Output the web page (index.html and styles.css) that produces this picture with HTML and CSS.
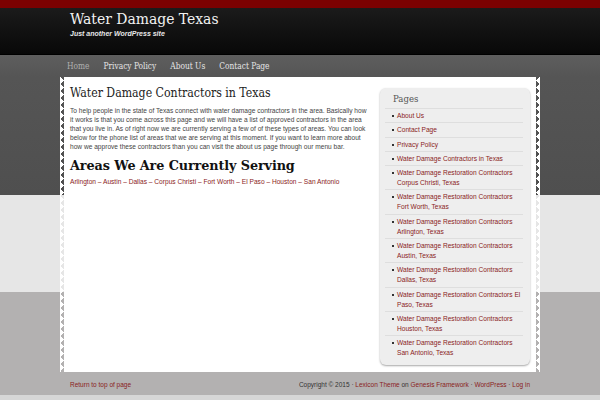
FILE: index.html
```html
<!DOCTYPE html>
<html>
<head>
<meta charset="utf-8">
<link rel="stylesheet" href="styles.css">
</head>
<body>
<div class="topbar"></div>
<header class="header">
  <div class="wrap">
    <div class="site-title">Water Damage Texas</div>
    <div class="tagline">Just another WordPress site</div>
  </div>
</header>
<nav class="nav">
  <div class="wrap nav-inner">
    <span class="nav-item current">Home</span>
    <span class="nav-item">Privacy Policy</span>
    <span class="nav-item">About Us</span>
    <span class="nav-item">Contact Page</span>
  </div>
</nav>
<div class="page">
  <div class="inner">
    <main class="content">
      <h1 class="entry-title">Water Damage Contractors in Texas</h1>
      <p class="entry-text">To help people in the state of Texas connect with water damage contractors in the area. Basically how it works is that you come across this page and we will have a list of approved contractors in the area that you live in. As of right now we are currently serving a few of of these types of areas. You can look below for the phone list of areas that we are serving at this moment. If you want to learn more about how we approve these contractors than you can visit the about us page through our menu bar.</p>
      <h2 class="areas-title">Areas We Are Currently Serving</h2>
      <p class="areas"><a>Arlington</a> – <a>Austin</a> – <a>Dallas</a> – <a>Corpus Christi</a> – <a>Fort Worth</a> – <a>El Paso</a> – <a>Houston</a> – <a>San Antonio</a></p>
    </main>
    <aside class="sidebar">
      <h4 class="widget-title">Pages</h4>
      <ul class="pages">
        <li><a>About Us</a></li>
        <li><a>Contact Page</a></li>
        <li><a>Privacy Policy</a></li>
        <li><a>Water Damage Contractors in Texas</a></li>
        <li><a>Water Damage Restoration Contractors Corpus Christi, Texas</a></li>
        <li><a>Water Damage Restoration Contractors Fort Worth, Texas</a></li>
        <li><a>Water Damage Restoration Contractors Arlington, Texas</a></li>
        <li><a>Water Damage Restoration Contractors Austin, Texas</a></li>
        <li><a>Water Damage Restoration Contractors Dallas, Texas</a></li>
        <li><a>Water Damage Restoration Contractors El Paso, Texas</a></li>
        <li><a>Water Damage Restoration Contractors Houston, Texas</a></li>
        <li><a>Water Damage Restoration Contractors San Antonio, Texas</a></li>
      </ul>
    </aside>
  </div>
  <footer class="footer wrap">
    <a class="totop">Return to top of page</a>
    <span class="credits">Copyright © 2015 · <a>Lexicon Theme</a> on <a>Genesis Framework</a> · <a>WordPress</a> · <a>Log in</a></span>
  </footer>
</div>
</body>
</html>
```
FILE: styles.css
```css
html, body {
  margin: 0;
  padding: 0;
}
body {
  width: 600px;
  height: 400px;
  overflow: hidden;
  font-family: "Liberation Sans", Arial, sans-serif;
  background: #b3b1b1;
}
a {
  color: #8a1c1c;
  text-decoration: none;
}
.wrap {
  width: 476px;
  margin: 0 auto;
  box-sizing: border-box;
}
.topbar {
  height: 8px;
  background: #7b0101;
}
.header {
  height: 46px;
  background: linear-gradient(to bottom, #1b1b1b, #080808);
  border-bottom: 1px solid #000;
}
.header .wrap {
  padding: 1px 0 0 8px;
}
.site-title {
  font-family: "DejaVu Serif Condensed", "DejaVu Serif", serif;
  font-stretch: semi-condensed;
  font-size: 15.5px;
  color: #f2f2f2;
  line-height: 21px;
}
.tagline {
  font-family: "Liberation Sans", Arial, sans-serif;
  font-size: 7px;
  font-style: italic;
  font-weight: bold;
  color: #e8e8e8;
  margin-top: 0;
}
.nav {
  height: 22px;
  background: linear-gradient(to bottom, #5e5e5e, #555);
}
.nav-inner {
  display: flex;
  gap: 14px;
  padding-left: 5px;
  align-items: center;
  height: 22px;
}
.nav-item {
  font-family: "DejaVu Serif Condensed", "DejaVu Serif", serif;
  font-stretch: semi-condensed;
  font-size: 8.3px;
  color: #e6e6e6;
}
.nav-item.current {
  color: #b0b0b0;
}
.page {
  background: linear-gradient(to bottom, #555 0, #4f4f4f 118px, #e6e6e6 118px, #e6e6e6 215px, #b3b1b1 215px, #b3b1b1 318px, #d6d6d6 318px);
  height: 323px;
}
.inner {
  width: 472px;
  margin: 0 auto;
  background: #fff;
  position: relative;
  display: flex;
  gap: 10px;
  padding: 0 6px;
  box-sizing: border-box;
  height: 295px;
}
.inner::before,
.inner::after {
  content: "";
  position: absolute;
  top: 0;
  bottom: 0;
  width: 4px;
}
.inner::before {
  left: -4px;
  background: conic-gradient(from 225deg at 100% 50%, #fff 90deg, transparent 0) 0 0 / 4px 7px repeat-y;
}
.inner::after {
  right: -4px;
  background: conic-gradient(from 45deg at 0 50%, #fff 90deg, transparent 0) 0 0 / 4px 7px repeat-y;
}
.content {
  width: 300px;
  flex: none;
  padding-top: 7px;
}
.entry-title {
  font-family: "DejaVu Serif Condensed", "DejaVu Serif", serif;
  font-stretch: semi-condensed;
  font-weight: normal;
  font-size: 12.2px;
  color: #222;
  margin: 0;
  line-height: 18px;
}
.entry-text {
  font-size: 6.6px;
  line-height: 9px;
  color: #444;
  margin: 4px 0 0 0;
}
.areas-title {
  font-family: "DejaVu Serif", serif;
  font-weight: bold;
  font-size: 12.8px;
  color: #111;
  margin: 6px 0 0 0;
  line-height: 18px;
  letter-spacing: -0.1px;
}
.areas {
  font-size: 6.6px;
  color: #8a1c1c;
  margin: 2px 0 0 0;
  line-height: 9px;
}
.sidebar {
  width: 150px;
  flex: none;
  margin-top: 11px;
  height: 277px;
  box-sizing: border-box;
  background: #eeeeee;
  border-radius: 6px;
  box-shadow: 0 1px 2px rgba(0,0,0,0.35);
  padding: 4px 7px 0 5px;
}
.widget-title {
  font-family: "DejaVu Serif Condensed", "DejaVu Serif", serif;
  font-stretch: semi-condensed;
  font-weight: normal;
  font-size: 9.5px;
  color: #555;
  margin: 0;
  padding: 0 0 3px 8px;
  line-height: 13px;
  border-bottom: 1px solid #dedede;
}
.pages {
  list-style: none;
  margin: 0;
  padding: 0;
}
.pages li {
  font-size: 6.6px;
  line-height: 10px;
  padding: 2px 0 1.3px 12px;
  border-bottom: 1px solid #dedede;
  position: relative;
}
.pages li:last-child {
  border-bottom: 0;
}
.pages li::before {
  content: "";
  position: absolute;
  left: 7px;
  top: 6px;
  width: 2px;
  height: 2px;
  background: #333;
}
.footer {
  display: flex;
  justify-content: space-between;
  align-items: center;
  height: 24px;
  padding: 0 8px;
  font-size: 6.5px;
  color: #333;
}
```
